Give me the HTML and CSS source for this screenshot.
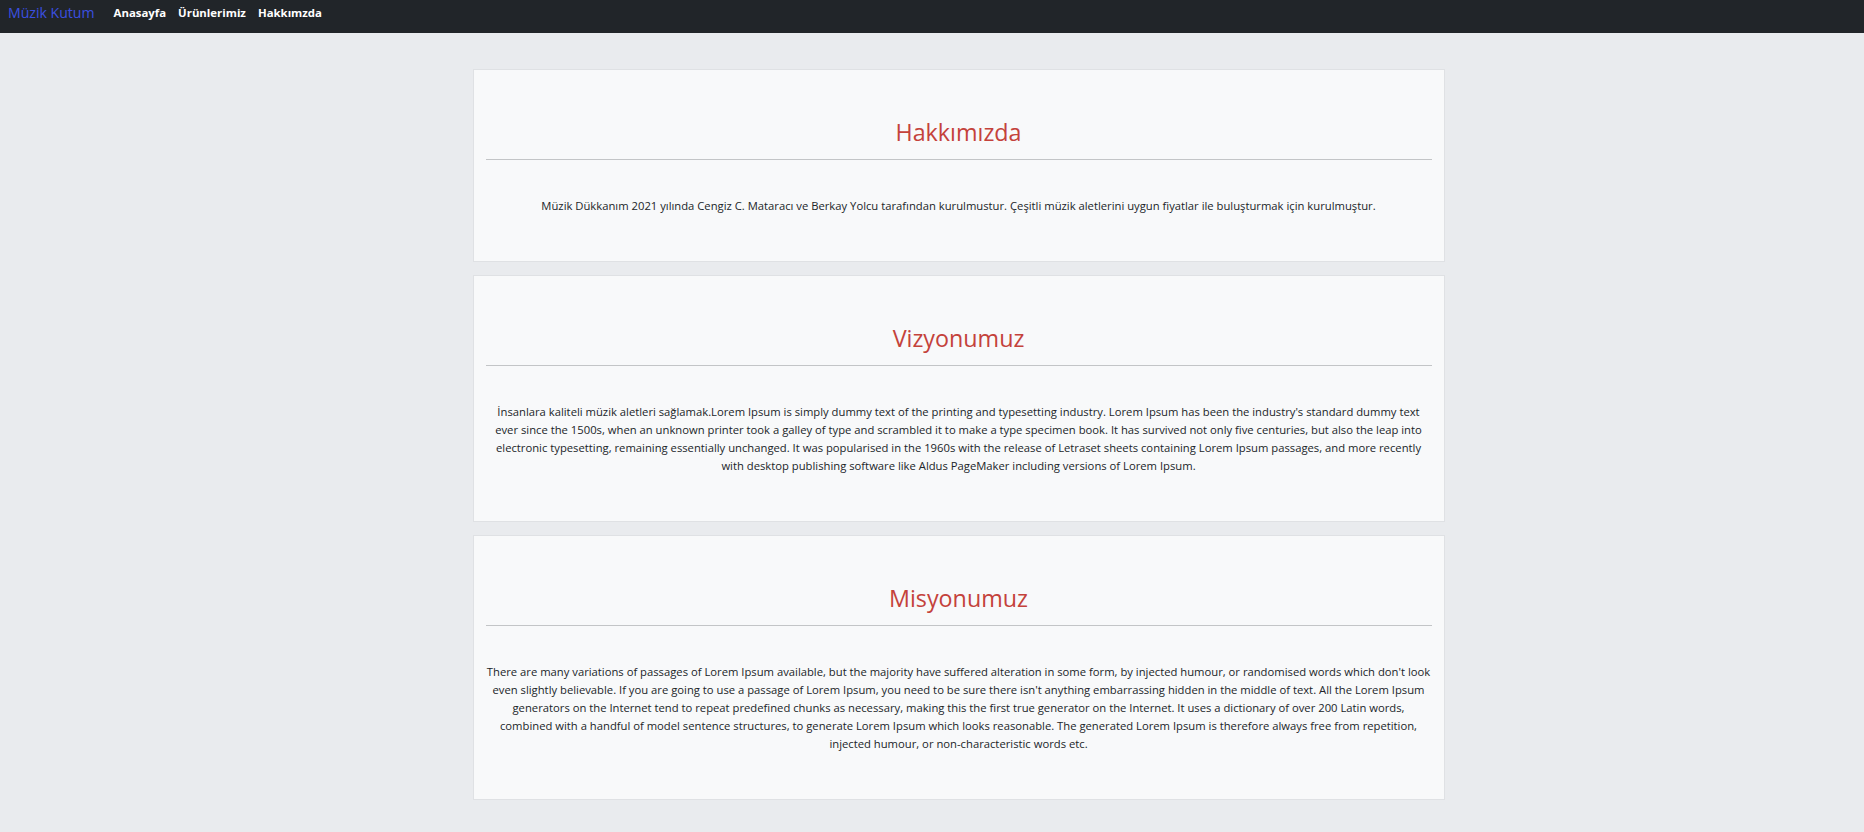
FILE: index.html
```html
<!DOCTYPE html>
<html lang="tr">
<head>
<meta charset="utf-8">
<title>Hakkımızda - Müzik Kutum</title>
<link rel="stylesheet" href="styles.css">
</head>
<body>
<nav class="navbar">
  <a class="brand" href="#">Müzik Kutum</a>
  <ul class="nav-links">
    <li><a href="#">Anasayfa</a></li>
    <li><a href="#">Ürünlerimiz</a></li>
    <li><a href="#">Hakkımzda</a></li>
  </ul>
</nav>
<main class="main">
  <div class="column">
    <section class="card">
      <h2 class="card-title">Hakkımızda</h2>
      <hr class="divider">
      <p class="card-text">Müzik Dükkanım 2021 yılında Cengiz C. Mataracı ve Berkay Yolcu tarafından kurulmustur. Çeşitli müzik aletlerini uygun fiyatlar ile buluşturmak için kurulmuştur.</p>
    </section>
    <section class="card">
      <h2 class="card-title">Vizyonumuz</h2>
      <hr class="divider">
      <p class="card-text">İnsanlara kaliteli müzik aletleri sağlamak.Lorem Ipsum is simply dummy text of the printing and typesetting industry. Lorem Ipsum has been the industry's standard dummy text ever since the 1500s, when an unknown printer took a galley of type and scrambled it to make a type specimen book. It has survived not only five centuries, but also the leap into electronic typesetting, remaining essentially unchanged. It was popularised in the 1960s with the release of Letraset sheets containing Lorem Ipsum passages, and more recently with desktop publishing software like Aldus PageMaker including versions of Lorem Ipsum.</p>
    </section>
    <section class="card">
      <h2 class="card-title">Misyonumuz</h2>
      <hr class="divider">
      <p class="card-text">There are many variations of passages of Lorem Ipsum available, but the majority have suffered alteration in some form, by injected humour, or randomised words which don't look even slightly believable. If you are going to use a passage of Lorem Ipsum, you need to be sure there isn't anything embarrassing hidden in the middle of text. All the Lorem Ipsum generators on the Internet tend to repeat predefined chunks as necessary, making this the first true generator on the Internet. It uses a dictionary of over 200 Latin words, combined with a handful of model sentence structures, to generate Lorem Ipsum which looks reasonable. The generated Lorem Ipsum is therefore always free from repetition, injected humour, or non-characteristic words etc.</p>
    </section>
  </div>
</main>
</body>
</html>
```
FILE: styles.css
```css
* {
  box-sizing: border-box;
}

body {
  margin: 0;
  background: #e9ebee;
  color: #212529;
  font-family: "Open Sans", "Noto Sans", sans-serif;
  font-size: 11.25px;
  line-height: 18px;
}

.navbar {
  display: flex;
  align-items: center;
  height: 33px;
  padding: 0 8px 7px;
  background: #212529;
}

.brand {
  font-size: 14.1px;
  line-height: 22px;
  color: #3b50e0;
  text-decoration: none;
  margin-right: 13px;
}

.nav-links {
  display: flex;
  list-style: none;
  margin: 0;
  padding: 0;
}

.nav-links a {
  display: block;
  padding: 0 6px;
  color: #ffffff;
  font-weight: 700;
  font-size: 11.4px;
  line-height: 18px;
  text-decoration: none;
}

.main {
  display: flex;
  justify-content: center;
  padding: 36px 0 40px 53px;
}

.column {
  width: 972px;
  display: flex;
  flex-direction: column;
  gap: 13px;
}

.card {
  background: #f8f9fa;
  border: 1px solid #dfe1e4;
  padding: 48px 12px 46px;
  text-align: center;
}

.card-title {
  margin: 0;
  font-size: 23.3px;
  line-height: 29px;
  font-weight: 500;
  color: #c4423b;
}

.divider {
  margin: 12px 0 0;
  border: 0;
  border-top: 1px solid #c3c5c7;
  height: 0;
}

.card-text {
  margin: 37px 0 0;
}
```
